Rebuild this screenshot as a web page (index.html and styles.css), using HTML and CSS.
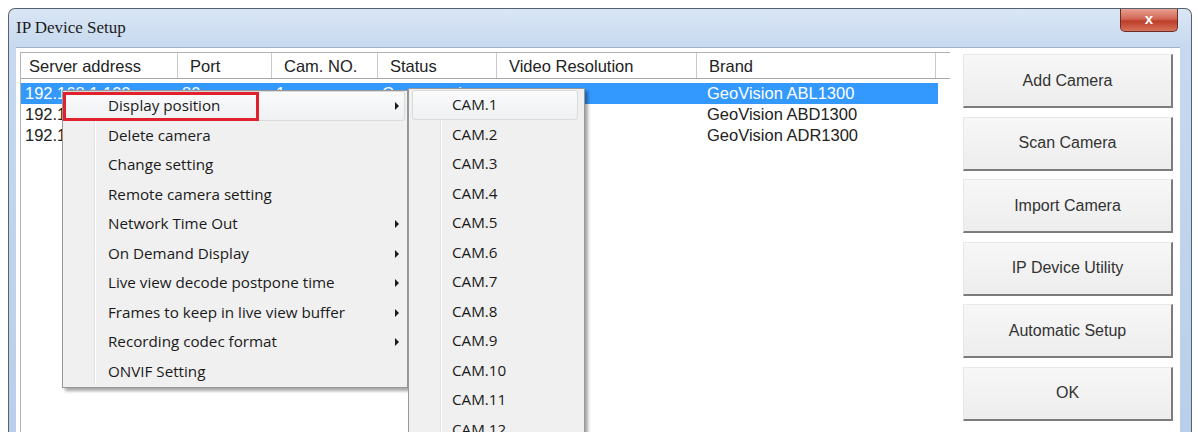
FILE: index.html
```html
<!DOCTYPE html>
<html lang="en">
<head>
    <meta charset="UTF-8">
    <meta name="viewport" content="width=device-width, initial-scale=1.0">
    <title>IP Device Setup</title>
    <link rel="stylesheet" href="styles.css">
</head>
<body>
<div class="window">
    <div class="title-bar">
        <span class="title">IP Device Setup</span>
        <button class="close-btn">x</button>
    </div>

    <div class="client">
        <div class="list">
            <div class="list-head">
                <div class="col c-addr">Server address</div>
                <div class="col c-port">Port</div>
                <div class="col c-cam">Cam. NO.</div>
                <div class="col c-status">Status</div>
                <div class="col c-res">Video Resolution</div>
                <div class="col c-brand">Brand</div>
                <div class="col c-fill"></div>
            </div>

            <div class="row selected">
                <div class="cell c-addr">192.168.1.100</div>
                <div class="cell c-port">80</div>
                <div class="cell c-cam">1</div>
                <div class="cell c-status">Connected</div>
                <div class="cell c-res"></div>
                <div class="cell c-brand">GeoVision ABL1300</div>
            </div>
            <div class="row">
                <div class="cell c-addr">192.168.1.101</div>
                <div class="cell c-port"></div>
                <div class="cell c-cam"></div>
                <div class="cell c-status"></div>
                <div class="cell c-res"></div>
                <div class="cell c-brand">GeoVision ABD1300</div>
            </div>
            <div class="row">
                <div class="cell c-addr">192.168.1.102</div>
                <div class="cell c-port"></div>
                <div class="cell c-cam"></div>
                <div class="cell c-status"></div>
                <div class="cell c-res"></div>
                <div class="cell c-brand">GeoVision ADR1300</div>
            </div>
        </div>

        <div class="side-buttons">
            <button class="side-btn">Add Camera</button>
            <button class="side-btn">Scan Camera</button>
            <button class="side-btn">Import Camera</button>
            <button class="side-btn">IP Device Utility</button>
            <button class="side-btn">Automatic Setup</button>
            <button class="side-btn">OK</button>
        </div>
    </div>
</div>

<!-- right click menu -->
<div class="menu context-menu">
    <div class="menu-item hover">Display position<span class="arrow"></span></div>
    <div class="menu-item">Delete camera</div>
    <div class="menu-item">Change setting</div>
    <div class="menu-item">Remote camera setting</div>
    <div class="menu-item">Network Time Out<span class="arrow"></span></div>
    <div class="menu-item">On Demand Display<span class="arrow"></span></div>
    <div class="menu-item">Live view decode postpone time<span class="arrow"></span></div>
    <div class="menu-item">Frames to keep in live view buffer<span class="arrow"></span></div>
    <div class="menu-item">Recording codec format<span class="arrow"></span></div>
    <div class="menu-item">ONVIF Setting</div>
    <span class="mark"></span>
</div>

<div class="menu sub-menu">
    <div class="menu-item hover">CAM.1</div>
    <div class="menu-item">CAM.2</div>
    <div class="menu-item">CAM.3</div>
    <div class="menu-item">CAM.4</div>
    <div class="menu-item">CAM.5</div>
    <div class="menu-item">CAM.6</div>
    <div class="menu-item">CAM.7</div>
    <div class="menu-item">CAM.8</div>
    <div class="menu-item">CAM.9</div>
    <div class="menu-item">CAM.10</div>
    <div class="menu-item">CAM.11</div>
    <div class="menu-item">CAM.12</div>
</div>
</body>
</html>
```

FILE: styles.css
```css
*
{
    box-sizing:border-box;
}
body
{
    margin:0;
    height:432px;
    overflow:hidden;
    background-color:#fff;
    font-family:"Liberation Sans", Arial, sans-serif;
}

/* window frame */
.window
{
    margin:8px 6px 0 8px;
    height:440px;
    display:flex;
    flex-direction:column;
    border:1px solid #59626c;
    border-bottom:none;
    border-radius:7px 7px 0 0;
    background:linear-gradient(to bottom, #d9e6f5 0, #c6d9ef 38px, #b8cfe9 100%);
    padding:0 11px 0 7px;
}
.title-bar
{
    height:38px;
    flex-shrink:0;
    display:flex;
    justify-content:space-between;
    align-items:flex-start;
}
.title
{
    font-family:"Liberation Serif", serif;
    font-size:17px;
    line-height:38px;
    color:#1c1c1c;
}
.close-btn
{
    width:58px;
    height:23px;
    margin-right:2px;
    padding:0 0 3px 0;
    border:1px solid #6e2d25;
    border-top:none;
    border-radius:0 0 5px 5px;
    background:linear-gradient(to bottom, #e8a092 0, #d26653 45%, #bd3d29 55%, #d7735c 100%);
    color:#fff;
    font-family:"Liberation Sans", sans-serif;
    font-weight:bold;
    font-size:15px;
}

.client
{
    flex:1;
    display:flex;
    gap:13px;
    padding:4px 7px 0 4px;
    background-color:#fff;
    border-top:1px solid #9fb2c8;
}

/* list view */
.list
{
    width:930px;
    border-left:1px solid #b5b5b5;
    font-size:16.5px;
    color:#222;
}
.list-head
{
    display:flex;
    height:27px;
    border-top:1px solid #b0b0b0;
    border-bottom:1px solid #a8a8a8;
}
.col
{
    padding:4px 0 0 8px;
    border-right:1px solid #c9c9c9;
    white-space:nowrap;
}
.col.c-port, .col.c-cam, .col.c-status, .col.c-res, .col.c-brand
{
    padding-left:12px;
}
.c-addr
{
    width:157px;
}
.c-port
{
    width:94px;
}
.c-cam
{
    width:106px;
}
.c-status
{
    width:119px;
}
.c-res
{
    width:200px;
}
.c-brand
{
    width:239px;
}
.col.c-fill
{
    flex:1;
    border-right:none;
}
.row
{
    display:flex;
    width:917px;
    height:21px;
    line-height:21px;
    white-space:nowrap;
}
.list-head + .row
{
    margin-top:4px;
}
.cell
{
    padding-left:4px;
    overflow:hidden;
}
.cell.c-brand
{
    padding-left:10px;
}
.row.selected
{
    background-color:#3399ff;
    color:#fff;
}

/* buttons on the right */
.side-buttons
{
    width:210px;
    display:flex;
    flex-direction:column;
    gap:8.5px;
    padding-top:2px;
}
.side-btn
{
    height:54px;
    border:none;
    border-top:1px solid #e8e8e8;
    border-left:1px solid #e8e8e8;
    border-right:2px solid #7c7c7c;
    border-bottom:2px solid #7c7c7c;
    background:linear-gradient(to bottom, #f7f7f7, #ededed);
    font-family:"Liberation Sans", Arial, sans-serif;
    font-size:16px;
    color:#333;
}

/* popup menus */
.menu
{
    position:absolute;
    background-color:#f0f0f0;
    border:1px solid #979797;
    box-shadow:3px 3px 3px rgba(0,0,0,0.35);
    font-family:"Open Sans", "Noto Sans", sans-serif;
    font-size:15.2px;
    color:#1a1a1a;
}
.menu::before
{
    content:"";
    position:absolute;
    left:31px;
    top:2px;
    bottom:2px;
    width:1px;
    background-color:#e2e3e3;
    box-shadow:1px 0 0 #fff;
}
.menu-item
{
    position:relative;
    height:29.5px;
    line-height:29.5px;
    padding-left:43px;
    white-space:nowrap;
}
.menu-item.hover
{
    border-radius:3px;
    background:linear-gradient(to bottom, #fbfbfc, #eef0f2);
    box-shadow:inset 0 0 0 1px #d9dadc;
}
.arrow
{
    position:absolute;
    right:6px;
    top:11px;
    border-left:4px solid #1a1a1a;
    border-top:4px solid transparent;
    border-bottom:4px solid transparent;
}
.context-menu
{
    left:62px;
    top:90px;
    width:346px;
    height:298px;
    padding:0 2px;
}
.mark
{
    position:absolute;
    left:0;
    top:1px;
    width:196px;
    height:29px;
    border:3px solid #e1222d;
}
.sub-menu
{
    left:408px;
    top:88px;
    width:177px;
    height:370px;
    padding:1px 2px 0 2px;
}
.sub-menu .menu-item
{
    padding-left:41px;
}
.sub-menu .menu-item.hover
{
    margin:0 4px 0 1px;
    padding-left:40px;
}
```
